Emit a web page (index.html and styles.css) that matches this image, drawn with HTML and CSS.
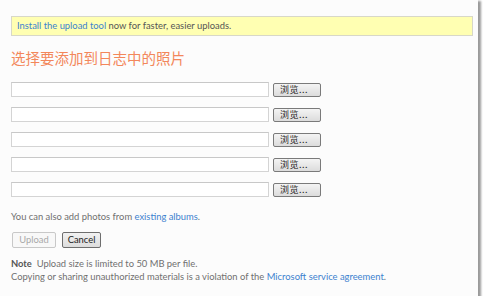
FILE: index.html
```html
<!DOCTYPE html>
<html>
<head>
<meta charset="utf-8">
<link rel="stylesheet" href="styles.css">
</head>
<body>
<div class="card">
  <div class="banner"><a class="link" href="#">Install the upload tool</a> now for faster, easier uploads.</div>
  <h1 class="title">选择要添加到日志中的照片</h1>
  <div class="rows">
    <div class="row"><span class="field"></span><span class="browse">浏览...</span></div>
    <div class="row"><span class="field"></span><span class="browse">浏览...</span></div>
    <div class="row"><span class="field"></span><span class="browse">浏览...</span></div>
    <div class="row"><span class="field"></span><span class="browse">浏览...</span></div>
    <div class="row"><span class="field"></span><span class="browse">浏览...</span></div>
  </div>
  <p class="also">You can also add photos from <a class="link" href="#">existing albums</a>.</p>
  <div class="actions">
    <span class="btn disabled">Upload</span>
    <span class="btn cancel">Cancel</span>
  </div>
  <p class="note"><b>Note</b>&nbsp; Upload size is limited to 50 MB per file.<br>Copying or sharing unauthorized materials is a violation of the <a class="link" href="#">Microsoft service agreement</a>.</p>
</div>
</body>
</html>
```
FILE: styles.css
```css
html, body {
  margin: 0;
  padding: 0;
  background: #ffffff;
}
body {
  font-family: "Lato", "Open Sans", sans-serif;
  font-size: 9.4px;
  color: #707070;
}
.card {
  width: 478px;
  height: 296px;
  box-sizing: border-box;
  background: #fcfcfc;
  padding: 16px 5px 0 11px;
  box-shadow: 2px 2px 2px 1px #9a9a9a;
}
.link {
  color: #3d82cf;
  text-decoration: none;
}
.banner {
  height: 20px;
  box-sizing: border-box;
  border: 1px solid #d8d8c8;
  background: #ffffb2;
  padding: 0 0 0 5px;
  line-height: 18px;
  color: #555;
}
.title {
  margin: 12px 0 0 0;
  font-family: "Noto Sans CJK SC", sans-serif;
  font-weight: normal;
  font-size: 14.5px;
  line-height: 20px;
  color: #f3875b;
}
.rows {
  margin-top: 14px;
  display: flex;
  flex-direction: column;
  gap: 10px;
}
.row {
  display: flex;
  align-items: center;
  gap: 4px;
  height: 15px;
}
.field {
  width: 258px;
  height: 15px;
  box-sizing: border-box;
  border: 1px solid #d4d4d4;
  border-top-color: #c8c8c8;
  background: #fff;
}
.browse {
  width: 48px;
  height: 14px;
  box-sizing: border-box;
  border: 1px solid #7a7a7a;
  border-radius: 2px;
  background: linear-gradient(#f4f4f4, #dcdcdc);
  font-family: "Noto Sans CJK SC", sans-serif;
  font-size: 9px;
  line-height: 12px;
  color: #222;
  padding-left: 6px;
  letter-spacing: 0.5px;
}
.also {
  margin: 13px 0 0 0;
  line-height: 14px;
}
.actions {
  margin: 8px 0 0 1px;
  display: flex;
  gap: 6px;
}
.btn {
  width: 44px;
  height: 16px;
  box-sizing: border-box;
  border: 1px solid #6e6e6e;
  border-radius: 2px;
  background: linear-gradient(#f2f2f2, #dddddd);
  color: #222;
  line-height: 14px;
  text-align: center;
}
.btn.cancel {
  width: 39px;
}
.btn.disabled {
  border-color: #c8c8c8;
  background: #f8f8f8;
  color: #a8a8a8;
}
.note {
  margin: 9px 0 0 0;
  line-height: 13px;
}
.note b {
  color: #555;
}
```
